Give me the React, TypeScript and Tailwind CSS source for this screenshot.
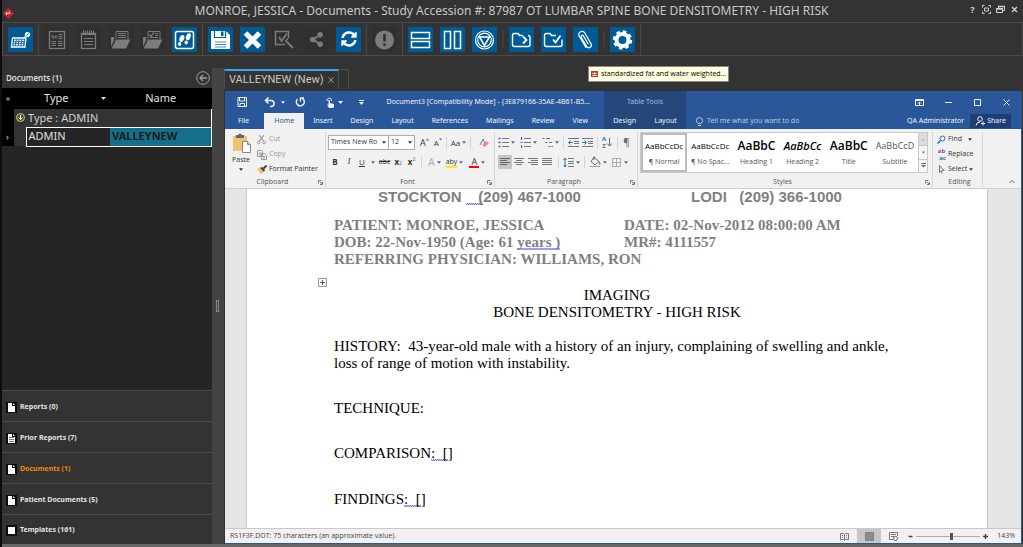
import { useState } from "react";
import type { ReactNode } from "react";
import clsx from "clsx";
import { FaShareAlt, FaSyncAlt } from "react-icons/fa";

interface IconProps {
  children: ReactNode;
  size?: number;
  className?: string;
}

function Icon({ children, size = 25, className }: IconProps) {
  return (
    <svg
      width={size}
      height={size}
      viewBox={`0 0 ${size} ${size}`}
      fill="none"
      stroke="currentColor"
      className={clsx("shrink-0", className)}
      aria-hidden="true"
    >
      {children}
    </svg>
  );
}

function Caret({ className }: { className?: string }) {
  return (
    <svg
      width="5"
      height="3"
      viewBox="0 0 5 3"
      className={clsx("shrink-0", className)}
      aria-hidden="true"
    >
      <path d="M0 0h5L2.5 3z" fill="currentColor" />
    </svg>
  );
}

/* ---------- viewer toolbar ---------- */

interface Tool {
  label: string;
  icon: ReactNode;
  disabled?: boolean;
}

const OPEN_FOLDER = (
  <path
    d="M3 19.500V10h3v3.500zM3.500 21.500l4.500-9h14.500l-4.500 9z"
    fill="currentColor"
    stroke="none"
  />
);

const TOOL_GROUPS: Tool[][][] = [
  [
    [
      {
        label: "Dictation",
        icon: (
          <Icon>
            <path d="M4.500 11h13.500l-1 9H3.500z" strokeWidth="1.300" />
            <path
              d="M6 13.200h11M5.600 15.500h11M5.400 17.800h10.500"
              strokeDasharray="1.800 0.900"
              strokeWidth="1.400"
            />
            <path d="M16 10.500l2-2.500" />
            <circle cx="19.500" cy="7.500" r="2.600" fill="currentColor" stroke="none" />
            <path d="M18.500 8.500l2-2" stroke="#005a96" />
          </Icon>
        ),
      },
    ],
  ],
  [
    [
      {
        label: "Word document",
        disabled: true,
        icon: (
          <Icon>
            <rect x="5.500" y="4.500" width="15" height="17" strokeWidth="1.300" />
            <text
              x="7"
              y="12"
              fontSize="7"
              fontWeight="700"
              fill="currentColor"
              stroke="none"
              fontFamily="Liberation Serif"
            >
              W
            </text>
            <path d="M14.500 7.500h4M14.500 9.500h4M14.500 11.500h4M7.500 14.500h4.500M7.500 16.500h4.500M7.500 18.500h4.500M14 14.500h4.500M14 16.500h4.500M14 18.500h4.500" />
          </Icon>
        ),
      },
      {
        label: "Notes",
        disabled: true,
        icon: (
          <Icon>
            <rect x="5.500" y="6.500" width="14" height="15" strokeWidth="1.300" />
            <path d="M5.500 7.500h14M7.500 3.500v4M9.500 3.500v4M11.500 3.500v4M13.500 3.500v4M15.500 3.500v4M17.500 3.500v4" />
            <path d="M8 11.500h9M8 14.500h9M8 17.500h9" />
          </Icon>
        ),
      },
      {
        label: "Open folder",
        disabled: true,
        icon: (
          <Icon>
            <path d="M8 12V4.500h12V12M10 6.500h8M10 8.500h8M10 10.500h8" />
            {OPEN_FOLDER}
          </Icon>
        ),
      },
      {
        label: "Approve folder",
        disabled: true,
        icon: (
          <Icon>
            <path d="M8 12V4.500h12V12M15 6.500h3M15 8.500h3M10 10.500h8" />
            <path d="M9.500 7.500l1.500 2 3-4" strokeWidth="1.300" />
            {OPEN_FOLDER}
          </Icon>
        ),
      },
      {
        label: "Follow up",
        icon: (
          <Icon>
            <rect x="3.500" y="4.500" width="18" height="17" rx="2" strokeWidth="1.500" />
            <g fill="currentColor" stroke="none">
              <ellipse cx="9.800" cy="11.500" rx="2.300" ry="3.600" transform="rotate(20 9.800 11.500)" />
              <ellipse cx="7.700" cy="17" rx="1.700" ry="1.900" />
              <ellipse cx="16.300" cy="9.700" rx="2.300" ry="3.600" transform="rotate(20 16.300 9.700)" />
              <ellipse cx="14.200" cy="15.500" rx="1.700" ry="1.900" />
            </g>
          </Icon>
        ),
      },
    ],
  ],
  [
    [
      {
        label: "Save",
        icon: (
          <Icon>
            <path d="M3 4h15l4 4v14H3z" fill="currentColor" stroke="none" />
            <path d="M6.500 4v6.500h11V4" stroke="#005a96" strokeWidth="1.200" />
            <path d="M13 4.500h2.500v4.500H13z" fill="#005a96" stroke="none" />
            <path d="M7 15h11M7 17.500h11M7 20h11" stroke="#005a96" strokeOpacity="0.700" />
          </Icon>
        ),
      },
      {
        label: "Close",
        icon: (
          <Icon>
            <path d="M5.500 6l14 14M19.500 6l-14 14" strokeWidth="5" />
          </Icon>
        ),
      },
      {
        label: "Verify",
        disabled: true,
        icon: (
          <Icon>
            <path d="M13 17.500H3.500v-13h13V11" strokeWidth="1.500" />
            <path d="M7 10l2.500 4L15 6.500" strokeWidth="1.800" />
            <path d="M14.500 14.500l6.500 6.500" strokeWidth="2" />
            <path d="M13 14.500l3-3" strokeWidth="1.200" />
          </Icon>
        ),
      },
      {
        label: "Share study",
        disabled: true,
        icon: <FaShareAlt className="size-[15px]" />,
      },
      { label: "Refresh", icon: <FaSyncAlt className="size-4" /> },
    ],
  ],
  [
    [
      {
        label: "Alert",
        disabled: true,
        icon: (
          <Icon>
            <circle cx="12.500" cy="13" r="9.500" fill="currentColor" stroke="none" />
            <path d="M12.500 7v7.500M12.500 16.500v2.500" stroke="#303030" strokeWidth="2.600" />
          </Icon>
        ),
      },
    ],
  ],
  [
    [
      {
        label: "Split rows",
        icon: (
          <Icon>
            <path d="M3.500 5.500h18v6h-18zM3.500 14.500h18v6h-18z" strokeWidth="1.500" />
          </Icon>
        ),
      },
      {
        label: "Split columns",
        icon: (
          <Icon>
            <path d="M4.500 4.500h6v17h-6zM14.500 4.500h6v17h-6z" strokeWidth="1.500" />
          </Icon>
        ),
      },
      {
        label: "Key images",
        icon: (
          <Icon>
            <circle cx="12.500" cy="13" r="9" strokeWidth="1.200" />
            <circle cx="12.500" cy="13" r="6.800" strokeWidth="1.200" />
            <path d="M7.500 10h10l-5 8.500z" strokeWidth="1.500" />
          </Icon>
        ),
      },
    ],
    [
      {
        label: "Forward",
        icon: (
          <Icon>
            <path
              d="M14 8.500H10.500L9 6.500H5.500Q3.500 6.500 3.500 8.500v9q0 2 2 2h13.500q2 0 2-2v-7q0-2-2-2"
              strokeWidth="1.400"
            />
            <path d="M14 9.500l3.500 3.500-3.500 3.500" strokeWidth="1.800" />
          </Icon>
        ),
      },
      {
        label: "Complete",
        icon: (
          <Icon>
            <path
              d="M15 8.500H10.500L9 6.500H5.500Q3.500 6.500 3.500 8.500v9q0 2 2 2h13.500q2 0 2-2v-5"
              strokeWidth="1.400"
            />
            <path d="M12 12.500l2.500 3 5-7" strokeWidth="1.800" />
          </Icon>
        ),
      },
      {
        label: "Attachments",
        icon: (
          <Icon>
            <path
              transform="rotate(-30 12.500 13)"
              d="M9 8V6.500a3.200 3.200 0 0 1 6.400 0V19a2.600 2.600 0 0 1-5.200 0V8.500a1.300 1.300 0 0 1 2.600 0V18M9 7v13"
              strokeWidth="1.200"
            />
          </Icon>
        ),
      },
    ],
    [
      {
        label: "Settings",
        icon: (
          <Icon>
            <circle cx="12.500" cy="13" r="6" strokeWidth="4" />
            <circle cx="12.500" cy="13" r="8.500" strokeWidth="2.400" strokeDasharray="3.600 3.076" />
          </Icon>
        ),
      },
    ],
  ],
];

function ToolButton({ tool }: { tool: Tool }) {
  return (
    <button
      type="button"
      aria-label={tool.label}
      className={clsx(
        "flex size-[25px] items-center justify-center",
        tool.disabled ? "bg-[#303030] text-[#7c7c7c]" : "bg-[#005a96] text-white"
      )}
    >
      {tool.icon}
    </button>
  );
}

function Toolbar() {
  return (
    <div className="flex h-[34px] border border-[#4a4a4a]">
      {TOOL_GROUPS.map((group, i) => (
        <div key={i} className="flex items-center border-r border-[#4a4a4a] px-[5px]">
          {group.map((run, j) => (
            <div key={j} className="flex items-center">
              {j > 0 && <span className="mx-[5px] h-4 w-0.5 bg-[#3f3f3f]" />}
              <div className="flex gap-[7px]">
                {run.map((tool) => (
                  <ToolButton key={tool.label} tool={tool} />
                ))}
              </div>
            </div>
          ))}
        </div>
      ))}
    </div>
  );
}

function TitleBar() {
  return (
    <header className="flex h-[22px] items-center">
      <div className="w-[53px] pt-1 pl-px">
        <Icon size={11}>
          <path d="M5.500 0L11 5.500 5.500 11 0 5.500z" fill="#c4252c" stroke="none" />
          <path d="M2.500 5.500h4M3.500 4v3M6 3.500l1 2" stroke="#f0d0d0" />
        </Icon>
      </div>
      <h1 className="flex-1 text-center font-['Noto_Sans','Open_Sans',sans-serif] text-[12px] text-[#c8c8c8]">
        MONROE, JESSICA - Documents - Study Accession #: 87987 OT LUMBAR SPINE BONE DENSITOMETRY - HIGH RISK
      </h1>
      <div className="flex items-center gap-[5px] pr-1 pb-[3px] text-[#d0d0d0]">
        <button type="button" aria-label="Help" className="w-[9px] text-[9px] font-bold">
          ?
        </button>
        <button type="button" aria-label="Full screen">
          <Icon size={9}>
            <path d="M.500 2.500v-2h2M6.500.500h2v2M8.500 6.500v2h-2M2.500 8.500h-2v-2M2.500 3h4v3h-4z" />
          </Icon>
        </button>
        <button type="button" aria-label="Restore">
          <Icon size={9}>
            <path d="M2.500 3V1.500h6v4H6.500M.500 3.500h6v4h-6z" />
            <path d="M2 1.500h7M0 4h7" strokeWidth="1.500" />
          </Icon>
        </button>
        <button type="button" aria-label="Close window">
          <Icon size={9}>
            <path d="M2 2l5 5M7 2l-5 5" strokeWidth="1.400" />
          </Icon>
        </button>
      </div>
    </header>
  );
}

/* ---------- left side ---------- */

const SECTIONS = [
  { label: "Reports (0)", icon: "page" },
  { label: "Prior Reports (7)", icon: "lines" },
  { label: "Documents (1)", icon: "page" },
  { label: "Patient Documents (5)", icon: "page" },
  { label: "Templates (161)", icon: "box" },
];

function SectionIcon({ kind }: { kind: string }) {
  return (
    <Icon size={11}>
      <rect width="11" height="11" fill="#0c0c0c" stroke="none" />
      {kind === "box" ? (
        <path d="M2 2h7v7H2z" fill="#fff" stroke="none" />
      ) : (
        <path d="M2 1h4v3h3v6H2zM7 1l2 2H7z" fill="#fff" stroke="none" />
      )}
      {kind === "lines" && <path d="M3 4.500h5M3 6.500h5M3 8.500h5" stroke="#777" />}
    </Icon>
  );
}

function Sidebar() {
  const [active, setActive] = useState("Documents (1)");

  return (
    <aside className="flex w-[210px] shrink-0 flex-col bg-[#252525]">
      <div className="flex h-5 items-center justify-between bg-[#333] pr-0.5 pl-1">
        <h2 className="font-['Open_Sans',sans-serif] text-[8px] font-semibold text-[#e4e4e4]">Documents (1)</h2>
        <button type="button" aria-label="Collapse" className="text-[#a0a0a0]">
          <Icon size={14}>
            <circle cx="7" cy="7" r="6.300" />
            <path d="M11 7H4M7 4L4 7l3 3" strokeWidth="1.300" />
          </Icon>
        </button>
      </div>
      <table className="w-full table-fixed border-collapse text-left font-['Noto_Sans','Open_Sans',sans-serif] text-[11px] text-[#e0e0e0]">
        <thead>
          <tr className="h-[21px] bg-black">
            <th className="w-3 p-0" aria-label="State">
              <span className="ml-1 block size-1 rounded-full bg-[#666]" />
            </th>
            <th className="w-3 p-0" />
            <th className="w-[84px] p-0 font-normal">
              <span className="flex items-center justify-between pr-1 pl-[18px]">
                Type <Caret />
              </span>
            </th>
            <th className="p-0 text-center font-normal">Name</th>
          </tr>
        </thead>
        <tbody>
          <tr className="h-[18px] bg-[#333] text-[#cfcfcf]">
            <td className="bg-black p-0" />
            <td colSpan={3} className="border-r border-white p-0">
              <span className="flex items-center gap-[3px] pl-0.5">
                <Icon size={9}>
                  <circle cx="4.500" cy="4.500" r="4" fill="#55551c" stroke="#c8c88a" />
                  <path d="M4.500 2v4.500M2.800 4.500l1.700 2 1.700-2" stroke="#fff" />
                </Icon>
                Type : ADMIN
              </span>
            </td>
          </tr>
          <tr className="h-[19px]">
            <td className="bg-black p-0 pl-1 text-[9px]">›</td>
            <td className="bg-[#333] p-0" />
            <td className="border border-r-0 border-white p-0 pl-0.5">ADMIN</td>
            <td className="border border-l-0 border-white bg-[#14708a] p-0 pl-0.5 font-bold text-[#1c1c1c]">
              VALLEYNEW
            </td>
          </tr>
        </tbody>
      </table>
      <nav className="mt-auto">
        {SECTIONS.map((s) => (
          <button
            key={s.label}
            type="button"
            onClick={() => setActive(s.label)}
            className={clsx(
              "flex h-[31px] w-full items-center gap-[3px] border-t border-[#4c4c4c] bg-[#333] pt-0.5 pl-1 font-['Noto_Sans',sans-serif] text-[7px] font-bold last:h-[30px]",
              s.label === active ? "text-[#f08a10]" : "text-[#e4e4e4]"
            )}
          >
            <SectionIcon kind={s.icon} />
            {s.label}
          </button>
        ))}
      </nav>
    </aside>
  );
}

/* ---------- word window ---------- */

const TABS = ["File", "Home", "Insert", "Design", "Layout", "References", "Mailings", "Review", "View"];

function WordHeader() {
  return (
    <div className="flex h-[38px] bg-[#2a579a] font-['Noto_Sans','Open_Sans',sans-serif] text-[#f0f4fa]">
      <div className="flex w-[379px] shrink-0 flex-col">
        <div className="flex h-[22px] items-center pl-3">
          <button type="button" aria-label="Save document">
            <Icon size={10}>
              <path d="M1 .500h8.500v9h-8.500zM2.500.500v3.500h5V.500M3 9.500V6.500h4.500v3" />
            </Icon>
          </button>
          <button type="button" aria-label="Undo" className="ml-[17px] flex items-center gap-1.5">
            <Icon size={11}>
              <path d="M4.500.500L1.500 3.500l3 3M1.500 3.500H7a3 3 0 0 1 0 6H6" strokeWidth="1.500" />
            </Icon>
            <Caret className="w-1" />
          </button>
          <button type="button" aria-label="Repeat" className="ml-2.5">
            <Icon size={10}>
              <path d="M7.500 1.500A4 4 0 1 1 2.500 2M5.500 4.500V1h3.500" strokeWidth="1.400" />
            </Icon>
          </button>
          <button type="button" aria-label="Touch mode" className="ml-5 flex items-center gap-0.5">
            <Icon size={11}>
              <path d="M2 4a2.300 2.300 0 1 1 4.500 0" />
              <path d="M3.500 3h1.500v3l4 1v3l-1 1H4L2 7.500l1.500.300z" fill="currentColor" stroke="none" />
            </Icon>
            <Caret />
          </button>
          <button type="button" aria-label="Customize toolbar" className="ml-4">
            <Icon size={5}>
              <path d="M0 .500h5" />
              <path d="M0 2h5L2.500 5z" fill="currentColor" stroke="none" />
            </Icon>
          </button>
          <span className="ml-auto pr-3.5 text-[7px] whitespace-pre">
            Document3 [Compatibility Mode] - {"{"}3E879166-35AE-4B61-B5...
          </span>
        </div>
        <div className="flex h-4 text-[7px]">
          {TABS.map((t) => (
            <button
              key={t}
              type="button"
              className={clsx(
                t === "File" && "pr-[15px] pl-[13px]",
                t === "Home" && "bg-[#f1f1f1] px-2.5 text-[#2a579a]",
                t !== "File" && t !== "Home" && "px-[9px]"
              )}
            >
              {t}
            </button>
          ))}
        </div>
      </div>
      <div className="flex w-[82px] shrink-0 flex-col bg-[#24477c]">
        <span className="flex h-[22px] items-center justify-center text-[7px] text-[#a9bbd8]">Table Tools</span>
        <div className="flex h-4 justify-around text-[7px]">
          <button type="button">Design</button>
          <button type="button">Layout</button>
        </div>
      </div>
      <div className="flex flex-1 flex-col">
        <div className="flex h-[22px] items-center justify-end gap-5 pr-2.5">
          <button type="button" aria-label="Ribbon options">
            <Icon size={9}>
              <path d="M.500 1.500h8v6h-8zM.500 2.500h8M4.500 7V4M3 5.500L4.500 4 6 5.500" />
            </Icon>
          </button>
          <button type="button" aria-label="Minimize">
            <Icon size={9}>
              <path d="M1 4.500h7" />
            </Icon>
          </button>
          <button type="button" aria-label="Maximize">
            <Icon size={9}>
              <path d="M1.500 1.500h6v6h-6z" />
            </Icon>
          </button>
          <button type="button" aria-label="Close document">
            <Icon size={9}>
              <path d="M1.500 1.500l6 6M7.500 1.500l-6 6" />
            </Icon>
          </button>
        </div>
        <div className="flex h-4 items-center text-[7px]">
          <label className="flex flex-1 items-center gap-[3px] pl-[9px] text-[#b9c8e0]">
            <Icon size={9}>
              <path d="M3 6.500Q1.500 5 1.500 3.500a3 3 0 0 1 6 0Q7.500 5 6 6.500zM3 8.500h3" />
            </Icon>
            <input
              aria-label="Tell me"
              placeholder="Tell me what you want to do"
              className="w-full outline-none placeholder:text-[#b9c8e0]"
            />
          </label>
          <span className="whitespace-nowrap">QA Administrator</span>
          <button type="button" className="mr-2.5 ml-1.5 flex h-[14px] items-center gap-0.5 bg-[#1e3f73] px-[5px]">
            <Icon size={10}>
              <circle cx="5" cy="3" r="2.300" />
              <path d="M1 9.500Q1.500 6 5 6M6 7.500h4M8 5.500v4" />
            </Icon>
            Share
          </button>
        </div>
      </div>
    </div>
  );
}

interface GroupProps {
  label: string;
  launcher?: boolean;
  className?: string;
  children: ReactNode;
}

function RibbonGroup({ label, launcher = true, className, children }: GroupProps) {
  return (
    <section className={clsx("mt-[3px] mb-px flex shrink-0 flex-col border-r border-[#d5d5d5]", className)}>
      <div className="h-[46px]">{children}</div>
      <div className="flex h-[9px] items-center justify-center text-[7px] text-[#555]">
        <span className="flex-1 text-center">{label}</span>
        {launcher && (
          <button type="button" aria-label={`${label} options`} className="mr-0.5 text-[#777]">
            <Icon size={5}>
              <path d="M.500 3.500v-3h3M2 2l2.500 2.500M4.500 2v2.500H2" />
            </Icon>
          </button>
        )}
      </div>
    </section>
  );
}

function ListLines({ rows }: { rows: number[] }) {
  return (
    <>
      {rows.map((y) => (
        <path key={y} d={`M4 ${y - 0.5}H11`} stroke="#777" />
      ))}
    </>
  );
}

interface RibbonButtonProps {
  label: string;
  caret?: boolean;
  active?: boolean;
  className?: string;
  children: ReactNode;
}

function RibbonButton({ label, caret, active, className, children }: RibbonButtonProps) {
  return (
    <button
      type="button"
      aria-label={label}
      className={clsx(
        "flex h-[14px] items-center justify-center gap-0.5",
        active && "bg-[#c6c6c6]",
        className
      )}
    >
      {children}
      {caret && <Caret className="w-1 text-[#666]" />}
    </button>
  );
}

function Clipboard() {
  return (
    <RibbonGroup label="Clipboard" className="w-[99px]">
      <div className="flex text-[7px]">
        <button type="button" className="flex w-7 flex-col items-center">
          <Icon size={21}>
            <path d="M2 4h14v15H2z" fill="#eec272" stroke="none" />
            <path d="M5 6V3h2Q9 0 11 3h2v3z" fill="#666" stroke="none" />
            <path d="M11.500 9.500h5l3 3v8h-8z" fill="#fff" stroke="#888" />
            <path d="M16.500 9.500v3h3" stroke="#888" />
          </Icon>
          <span className="mt-0.5 leading-[9px]">Paste</span>
          <Caret className="mt-1 w-1" />
        </button>
        <div className="flex flex-col pl-0.5">
          <button type="button" className="flex h-[15px] items-center gap-0.5 text-[#999]">
            <Icon size={10}>
              <path d="M2 0l4.500 6M7 0L2.500 6" strokeWidth="1.200" />
              <circle cx="1.800" cy="7.500" r="1.300" />
              <circle cx="7.200" cy="7.500" r="1.300" />
            </Icon>
            Cut
          </button>
          <button type="button" className="flex h-[15px] items-center gap-0.5 text-[#999]">
            <Icon size={10}>
              <path d="M.500.500h4l1 1v5h-5zM4.500 3.500h3l2 2v4h-5z" fill="#f1f1f1" />
              <path d="M2 3h2M2 5h2M6 6.500h2M6 8h2" />
            </Icon>
            Copy
          </button>
          <button type="button" className="flex h-[15px] items-center gap-0.5">
            <Icon size={10}>
              <path d="M0 4l3-2 4 4-3 3.500z" fill="#eec272" stroke="none" />
              <path d="M4 2.500l3.500 3.500M6 4l3.500-3.500" stroke="#444" strokeWidth="2" />
            </Icon>
            Format Painter
          </button>
        </div>
      </div>
    </RibbonGroup>
  );
}

function FontGroup() {
  return (
    <RibbonGroup label="Font" className="w-[169px] pl-0.5">
      <div className="flex h-5 items-center pt-px text-[7px]">
        <div className="flex items-center border border-[#ababab] bg-white">
          <select
            aria-label="Font family"
            className="h-[13px] w-[53px] appearance-none pl-0.5 outline-none"
            defaultValue="Times New Ro"
          >
            <option>Times New Ro</option>
          </select>
          <Caret className="mr-0.5 w-1" />
          <span className="h-[13px] w-px bg-[#ababab]" />
          <select aria-label="Font size" className="h-[13px] w-[19px] appearance-none pl-0.5 outline-none" defaultValue="12">
            <option>12</option>
          </select>
          <Caret className="mr-0.5 w-1" />
        </div>
        <RibbonButton label="Grow font" className="ml-[5px] text-[9px]">
          A<Caret className="-mt-1.5 -ml-0.5 w-[3px] rotate-180 text-[#2a6fb5]" />
        </RibbonButton>
        <RibbonButton label="Shrink font" className="ml-[5px] text-[8px]">
          A<Caret className="-mt-1.5 -ml-0.5 w-[3px] text-[#2a6fb5]" />
        </RibbonButton>
        <span className="mx-1 h-3 w-px bg-[#d5d5d5]" />
        <RibbonButton label="Change case" caret className="text-[8px]">
          Aa
        </RibbonButton>
        <span className="mx-1 h-3 w-px bg-[#d5d5d5]" />
        <RibbonButton label="Clear formatting" className="ml-1">
          <Icon size={10}>
            <path d="M1 7L4 1l2.500 6" stroke="#777" />
            <path d="M3 7l4-4 3 2-4 4z" fill="#e88a9a" stroke="none" />
          </Icon>
        </RibbonButton>
      </div>
      <div className="flex h-5 items-center pl-[3px] text-[8px]">
        <RibbonButton label="Bold" className="w-2 font-bold">B</RibbonButton>
        <RibbonButton label="Italic" className="ml-1.5 w-2 font-serif italic">I</RibbonButton>
        <RibbonButton label="Underline" caret className="ml-1.5">
          <span className="mr-1 underline">U</span>
        </RibbonButton>
        <RibbonButton label="Strikethrough" className="ml-1 text-[7px] line-through">abc</RibbonButton>
        <RibbonButton label="Subscript" className="ml-1">
          <span className="font-bold">x</span>
          <span className="-ml-0.5 pt-1 text-[5px] text-[#2a6fb5]">2</span>
        </RibbonButton>
        <RibbonButton label="Superscript" className="ml-1.5">
          <span className="font-bold">x</span>
          <span className="-ml-0.5 pb-1 text-[5px] text-[#2a6fb5]">2</span>
        </RibbonButton>
        <span className="mx-1.5 h-3 w-px bg-[#d5d5d5]" />
        <RibbonButton label="Text effects" caret className="text-[10px] text-[#aaa]">
          A
        </RibbonButton>
        <RibbonButton label="Highlight" caret className="ml-[5px]">
          <span className="border-b-2 border-[#ffee00] text-[7px] leading-[9px]">aby</span>
        </RibbonButton>
        <RibbonButton label="Font color" caret className="ml-1.5">
          <span className="w-2.5 border-b-2 border-[#f00] text-[9px] leading-[9px]">A</span>
        </RibbonButton>
      </div>
    </RibbonGroup>
  );
}

function ParagraphGroup() {
  return (
    <RibbonGroup label="Paragraph" className="w-[143px] pl-[3px]">
      <div className="flex h-5 items-center pt-px">
        <RibbonButton label="Bullets" caret>
          <Icon size={11}>
            <path d="M.500 1.500h2M.500 5.500h2M.500 9.500h2" stroke="#2a6fb5" strokeWidth="1.500" />
            <ListLines rows={[2, 6, 10]} />
          </Icon>
        </RibbonButton>
        <RibbonButton label="Numbering" caret className="ml-[5px]">
          <Icon size={11}>
            <path d="M1.500 0v3M.500 5.500h2M1.500 8v3" stroke="#2a6fb5" />
            <ListLines rows={[2, 6, 10]} />
          </Icon>
        </RibbonButton>
        <RibbonButton label="Multilevel list" caret className="ml-[5px]">
          <Icon size={11}>
            <path d="M.500 1.500h2M3.500 5.500h2M6.500 9.500h2" stroke="#2a6fb5" />
            <path d="M4 1.500h4M7 5.500h3M9.500 9.500h1.500" stroke="#777" />
          </Icon>
        </RibbonButton>
        <span className="mx-1 h-3 w-px bg-[#d5d5d5]" />
        <RibbonButton label="Decrease indent">
          <Icon size={11}>
            <path d="M0 1.500h11M6 4.500h5M6 6.500h5M0 9.500h11" stroke="#777" />
            <path d="M5 5.500H1M2.500 3.500l-2 2 2 2" stroke="#2a6fb5" />
          </Icon>
        </RibbonButton>
        <RibbonButton label="Increase indent" className="ml-[3px]">
          <Icon size={11}>
            <path d="M0 1.500h11M6 4.500h5M6 6.500h5M0 9.500h11" stroke="#777" />
            <path d="M0 5.500h4M2.500 3.500l2 2-2 2" stroke="#2a6fb5" />
          </Icon>
        </RibbonButton>
        <span className="mx-1 h-3 w-px bg-[#d5d5d5]" />
        <RibbonButton label="Sort">
          <span className="flex flex-col text-[6px] leading-[7px] font-bold">
            <span className="text-[#2a6fb5]">A</span>
            <span className="text-[#8a4fa0]">Z</span>
          </span>
          <Icon size={9} className="-ml-0.5">
            <path d="M3.500 0v8M1 5.500L3.500 8 6 5.500" stroke="#666" />
          </Icon>
        </RibbonButton>
        <span className="mx-0.5 h-3 w-px bg-[#d5d5d5]" />
        <RibbonButton label="Show marks" className="ml-[3px] text-[10px] text-[#666]">¶</RibbonButton>
      </div>
      <div className="flex h-5 items-center">
        <RibbonButton label="Align left" active className="w-[14px]">
          <Icon size={10}>
            <path d="M0 1.500h10M0 3.500h7M0 5.500h10M0 7.500h7" stroke="#666" />
          </Icon>
        </RibbonButton>
        <RibbonButton label="Align center" className="w-[14px]">
          <Icon size={10}>
            <path d="M0 1.500h10M2 3.500h6M0 5.500h10M2 7.500h6" stroke="#777" />
          </Icon>
        </RibbonButton>
        <RibbonButton label="Align right" className="w-[14px]">
          <Icon size={10}>
            <path d="M0 1.500h10M3 3.500h7M0 5.500h10M3 7.500h7" stroke="#777" />
          </Icon>
        </RibbonButton>
        <RibbonButton label="Justify" className="w-[14px]">
          <Icon size={10}>
            <path d="M0 1.500h10M0 3.500h10M0 5.500h10M0 7.500h10" stroke="#777" />
          </Icon>
        </RibbonButton>
        <span className="mx-1 h-3 w-px bg-[#d5d5d5]" />
        <RibbonButton label="Line spacing" caret>
          <Icon size={11}>
            <path d="M2 1v9M.500 3L2 1l1.500 2M.500 8L2 10l1.500-2" stroke="#2a6fb5" />
            <path d="M5 1.500h6M5 4.500h6M5 6.500h6M5 9.500h6" stroke="#777" />
          </Icon>
        </RibbonButton>
        <span className="mx-1 h-3 w-px bg-[#d5d5d5]" />
        <RibbonButton label="Shading" caret>
          <Icon size={12}>
            <path d="M5 1l5 4.500-4 3.500-4-3.500zM5 4V.500" stroke="#666" />
            <path d="M10 5.500q2 3 .500 3.500" stroke="#2a6fb5" />
            <path d="M1 10.500h10" stroke="#999" />
          </Icon>
        </RibbonButton>
        <RibbonButton label="Borders" caret className="ml-1">
          <Icon size={11}>
            <path d="M1.500 1.500h8v8h-8zM5.500 1.500v8M1.500 5.500h8" stroke="#aaa" />
          </Icon>
        </RibbonButton>
      </div>
    </RibbonGroup>
  );
}

const STYLES = [
  { name: "¶ Normal", sample: "AaBbCcDc", font: "text-[8px]" },
  { name: "¶ No Spac...", sample: "AaBbCcDc", font: "text-[8px]" },
  { name: "Heading 1", sample: "AaBbC", font: "text-[12px] font-semibold" },
  { name: "Heading 2", sample: "AaBbCc", font: "text-[11px] font-semibold italic" },
  { name: "Title", sample: "AaBbC", font: "text-[12px] font-semibold" },
  { name: "Subtitle", sample: "AaBbCcD", font: "text-[9px] text-[#555]" },
];

function StylesGroup() {
  return (
    <RibbonGroup label="Styles" className="min-w-0 flex-1 pl-0.5">
      <div className="mr-1 flex h-[41px] border border-[#c8c8c8] bg-white">
        {STYLES.map((s) => (
          <button
            key={s.name}
            type="button"
            className={clsx(
              "flex min-w-0 flex-1 flex-col overflow-hidden border-2 text-center",
              s.name === "¶ Normal" ? "border-[#bdbdbd]" : "border-transparent"
            )}
          >
            <span
              className={clsx(
                "flex w-full flex-1 items-center justify-center overflow-hidden whitespace-nowrap",
                s.name !== "Subtitle" && "text-black",
                s.font
              )}
            >
              {s.sample}
            </span>
            <span className="h-[13px] w-full text-[7px] whitespace-nowrap text-[#555]">{s.name}</span>
          </button>
        ))}
        <div className="flex w-[9px] flex-col divide-y divide-[#c8c8c8] border-l border-[#c8c8c8] bg-[#f6f6f6] text-[#666]">
          <button type="button" aria-label="Previous styles" className="flex flex-1 items-center justify-center bg-[#dcdcdc]">
            <Caret className="w-[3px] rotate-180 text-[#aaa]" />
          </button>
          <button type="button" aria-label="Next styles" className="flex flex-1 items-center justify-center">
            <Caret className="w-[3px]" />
          </button>
          <button type="button" aria-label="More styles" className="flex flex-1 items-center justify-center">
            <Icon size={5}>
              <path d="M0 .500h5" />
              <path d="M0 2h5L2.500 4.500z" fill="currentColor" stroke="none" />
            </Icon>
          </button>
        </div>
      </div>
    </RibbonGroup>
  );
}

function EditingGroup() {
  return (
    <RibbonGroup label="Editing" launcher={false} className="w-[50px] pl-1">
      <div className="flex flex-col text-[7px]">
        <button type="button" className="flex h-[15px] items-center gap-0.5">
          <Icon size={9}>
            <circle cx="5.500" cy="3.500" r="2.500" stroke="#2a6fb5" />
            <path d="M3.500 5.500L.500 8.500" stroke="#2a6fb5" strokeWidth="1.500" />
          </Icon>
          Find <Caret className="ml-1 w-1" />
        </button>
        <button type="button" className="flex h-[15px] items-center gap-0.5">
          <span className="flex w-[9px] flex-col text-[6px] leading-[7px] font-bold">
            <span className="text-[#8a4fa0]">ab</span>
            <span className="pl-0.5 text-[#2a6fb5]">ac</span>
          </span>
          Replace
        </button>
        <button type="button" className="flex h-[15px] items-center gap-0.5">
          <Icon size={9}>
            <path d="M2.500.500v7l1.700-1.500 1 2.500M2.500.500l4.500 5H4.500" stroke="#777" />
          </Icon>
          Select <Caret className="w-1" />
        </button>
      </div>
    </RibbonGroup>
  );
}

function Ribbon() {
  return (
    <div className="flex h-[60px] border-b border-[#cfcfcf] bg-[#f1f1f1] pl-0.5 text-[#333]">
      <Clipboard />
      <FontGroup />
      <ParagraphGroup />
      <StylesGroup />
      <EditingGroup />
      <div className="flex w-[38px] items-end justify-end pr-1.5 pb-[3px]">
        <button type="button" aria-label="Collapse ribbon" className="text-[#666]">
          <Icon size={6}>
            <path d="M.500 4L3 1.500 5.500 4" />
          </Icon>
        </button>
      </div>
    </div>
  );
}

/* grammar mark: a two pixel zigzag along the bottom of the run */
function Wavy({ children }: { children: ReactNode }) {
  return (
    <span className="bg-[conic-gradient(#3a3af0_25%,transparent_0_50%,#3a3af0_0_75%,transparent_0)] bg-[length:2px_2px] bg-bottom bg-repeat-x whitespace-pre">
      {children}
    </span>
  );
}

function DocumentPage() {
  return (
    <main className="flex min-h-0 flex-1 overflow-hidden bg-[#e6e6e6] pr-[33px] pl-[21px]">
      <article className="-mt-px flex-1 border-x border-[#c8c8c8] bg-white px-[87px] font-['Liberation_Serif',serif] text-[15px] leading-[17px] text-black">
        <div className="grid grid-cols-[313px_1fr] pl-11 font-['Liberation_Sans',sans-serif] font-bold text-[#7f7f7f]">
          <p className="whitespace-pre">
            STOCKTON <Wavy>{"   ("}</Wavy>209) 467-1000
          </p>
          <p className="whitespace-pre">LODI   (209) 366-1000</p>
        </div>
        <div className="mt-3 grid grid-cols-[290px_1fr] font-bold text-[#7f7f7f]">
          <p>PATIENT: MONROE, JESSICA</p>
          <p>DATE: 02-Nov-2012 08:00:00 AM</p>
          <p>
            DOB: 22-Nov-1950 (Age: 61 <Wavy>years )</Wavy>
          </p>
          <p>MR#: 4111557</p>
          <p className="col-span-2">REFERRING PHYSICIAN: WILLIAMS, RON</p>
        </div>
        <div className="-ml-4 flex h-[19px] items-end">
          <Icon size={9} className="bg-white text-[#555]">
            <path d="M.500.500h8v8h-8z" stroke="#999" />
            <path d="M4.500 2v5M2 4.500h5" />
          </Icon>
        </div>
        <p className="text-center">IMAGING</p>
        <p className="text-center">BONE DENSITOMETRY - HIGH RISK</p>
        <p className="mt-[17px] whitespace-pre">
          HISTORY:  43-year-old male with a history of an injury, complaining of swelling and ankle,
          <br />
          loss of range of motion with instability.
        </p>
        <p className="mt-7">TECHNIQUE:</p>
        <p className="mt-7">
          COMPARISON<Wavy>{":  ["}</Wavy>]
        </p>
        <p className="mt-[29px]">
          FINDINGS<Wavy>{":  ["}</Wavy>]
        </p>
      </article>
    </main>
  );
}

function StatusBar() {
  const [zoom, setZoom] = useState(56);

  return (
    <footer className="flex h-[15px] items-center border-t border-[#c8c8c8] bg-[#f1f1f1] pl-[5px] text-[7px] text-[#444]">
      <span className="flex-1">RS1F3F.DOT: 75 characters (an approximate value).</span>
      <button type="button" aria-label="Read mode" className="mr-2">
        <Icon size={9}>
          <path d="M.500 1.500h3l1 1 1-1h3v6h-3l-1 1-1-1h-3zM4.500 2v6M2 3.500h1M2 5.500h1M6 3.500h1M6 5.500h1" stroke="#777" />
        </Icon>
      </button>
      <button type="button" aria-label="Print layout" className="flex h-[14px] w-6 items-center justify-center bg-[#c6c6c6]">
        <Icon size={9}>
          <path d="M.500.500h8v8h-8z" fill="#8c8c8c" stroke="#808080" />
        </Icon>
      </button>
      <button type="button" aria-label="Web layout" className="ml-2">
        <Icon size={9}>
          <path d="M8.500 4V.500h-8v7H4M2 2.500h5M2 4.500h3" stroke="#777" />
          <circle cx="6.500" cy="6.500" r="2" stroke="#666" />
        </Icon>
      </button>
      <button type="button" aria-label="Zoom out" className="ml-2.5">
        <Icon size={5}>
          <path d="M.500 2.500h4" strokeWidth="1.500" />
        </Icon>
      </button>
      <input
        type="range"
        aria-label="Zoom"
        value={zoom}
        onChange={(e) => setZoom(Number(e.target.value))}
        className="mx-[3px] h-px w-16 appearance-none bg-[#aaa] outline-none [&::-webkit-slider-thumb]:h-[7px] [&::-webkit-slider-thumb]:w-[3px] [&::-webkit-slider-thumb]:appearance-none [&::-webkit-slider-thumb]:bg-[#555]"
      />
      <button type="button" aria-label="Zoom in">
        <Icon size={5}>
          <path d="M0 2.500h5M2.500 0v5" strokeWidth="1.500" />
        </Icon>
      </button>
      <span className="w-[33px] pr-1.5 text-right">143%</span>
    </footer>
  );
}

function Workspace() {
  return (
    <div className="flex min-w-0 flex-1 flex-col pt-px">
      <div className="flex h-[22px]">
        <div className="flex h-5 items-center gap-1 border-x border-t-2 border-x-[#4c4c4c] border-t-[#36a8f0] px-1 font-['Roboto',sans-serif] text-[11px] text-[#c8c8c8]">
          VALLEYNEW (New)
          <button type="button" aria-label="Close tab">
            <Icon size={6}>
              <path d="M.500.500l5 5M5.500.500l-5 5" stroke="#999" />
            </Icon>
          </button>
        </div>
        <span className="h-5 w-2.5 border-t border-r border-[#4c4c4c]" />
      </div>
      <div className="mr-px ml-px flex min-h-0 flex-1 flex-col border-r border-b border-[#2a579a] font-['Open_Sans','Noto_Sans',sans-serif]">
        <WordHeader />
        <Ribbon />
        <DocumentPage />
        <StatusBar />
      </div>
    </div>
  );
}

export default function App() {
  return (
    <div className="relative flex h-screen flex-col overflow-hidden border-l-2 border-[#0c0c0c] bg-[#333]">
      <TitleBar />
      <Toolbar />
      <div className="flex min-h-0 flex-1 border-b-[3px] border-[#686868] pt-3">
        <Sidebar />
        <div className="flex w-3 shrink-0 items-center justify-center bg-[#444] pr-0.5">
          <span className="h-3 w-[3px] border border-[#888]" />
        </div>
        <Workspace />
      </div>
      <div
        role="tooltip"
        className="absolute top-[66px] left-[586px] flex h-4 items-center gap-[3px] border border-[#8a8a7a] bg-[#ffffe1] px-0.5 font-['Open_Sans',sans-serif] text-[7px] font-medium text-black"
      >
        <Icon size={7}>
          <path d="M0 0h7v6H0z" fill="#b04040" stroke="none" />
          <path d="M1 2.500h5M1 4.500h5M3.500 1v4" stroke="#f0c0c0" />
        </Icon>
        standardized fat and water weighted...
      </div>
    </div>
  );
}
